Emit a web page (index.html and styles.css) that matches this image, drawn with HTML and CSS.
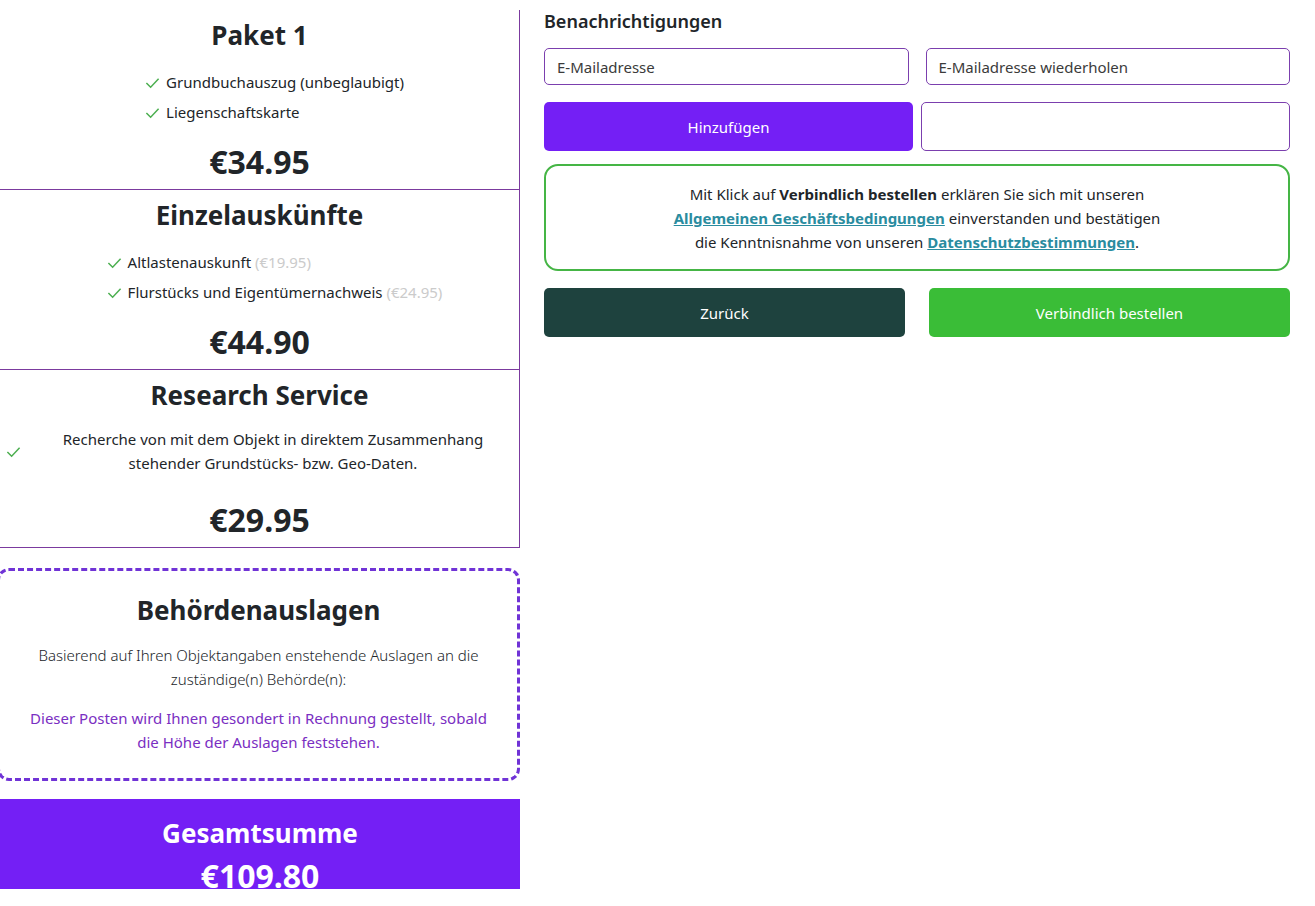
FILE: index.html
```html
<!DOCTYPE html>
<html lang="de">
<head>
    <meta charset="UTF-8">
    <meta name="viewport" content="width=device-width, initial-scale=1.0">
    <title>Bestellung</title>
    <link rel="stylesheet" href="styles.css">
</head>
<body>
    <div class="page">
        <div class="summary">
            <div class="products">
                <div class="card">
                    <h3>Paket 1</h3>
                    <ul class="items">
                        <li><svg class="check" viewBox="0 0 16 16"><path d="M1.5 8.5l4.5 4.5 8.5-9"/></svg>Grundbuchauszug (unbeglaubigt)</li>
                        <li><svg class="check" viewBox="0 0 16 16"><path d="M1.5 8.5l4.5 4.5 8.5-9"/></svg>Liegenschaftskarte</li>
                    </ul>
                    <h2>€34.95</h2>
                </div>
                <div class="card">
                    <h3>Einzelauskünfte</h3>
                    <ul class="items">
                        <li><svg class="check" viewBox="0 0 16 16"><path d="M1.5 8.5l4.5 4.5 8.5-9"/></svg>Altlastenauskunft <span class="muted">(€19.95)</span></li>
                        <li><svg class="check" viewBox="0 0 16 16"><path d="M1.5 8.5l4.5 4.5 8.5-9"/></svg>Flurstücks und Eigentümernachweis <span class="muted">(€24.95)</span></li>
                    </ul>
                    <h2>€44.90</h2>
                </div>
                <div class="card">
                    <h3>Research Service</h3>
                    <div class="desc">
                        <svg class="check" viewBox="0 0 16 16"><path d="M1.5 8.5l4.5 4.5 8.5-9"/></svg>
                        <p>Recherche von mit dem Objekt in direktem Zusammenhang<br>stehender Grundstücks- bzw. Geo-Daten.</p>
                    </div>
                    <h2>€29.95</h2>
                </div>
            </div>

            <div class="fees">
                <h3>Behördenauslagen</h3>
                <p class="fees-text">Basierend auf Ihren Objektangaben enstehende Auslagen an die zuständige(n) Behörde(n):</p>
                <p class="fees-note">Dieser Posten wird Ihnen gesondert in Rechnung gestellt, sobald die Höhe der Auslagen feststehen.</p>
            </div>

            <div class="total">
                <h3>Gesamtsumme</h3>
                <h2>€109.80</h2>
            </div>
        </div>

        <div class="checkout">
            <h4>Benachrichtigungen</h4>
            <div class="row inputs">
                <input type="email" placeholder="E-Mailadresse">
                <input type="email" placeholder="E-Mailadresse wiederholen">
            </div>
            <div class="row adds">
                <button class="btn btn-purple">Hinzufügen</button>
                <div class="email-list"></div>
            </div>
            <div class="terms">
                Mit Klick auf <b>Verbindlich bestellen</b> erklären Sie sich mit unseren<br>
                <a href="#">Allgemeinen Geschäftsbedingungen</a> einverstanden und bestätigen<br>
                die Kenntnisnahme von unseren <a href="#">Datenschutzbestimmungen</a>.
            </div>
            <div class="row actions">
                <button class="btn btn-dark">Zurück</button>
                <button class="btn btn-green">Verbindlich bestellen</button>
            </div>
        </div>
    </div>
</body>
</html>
```

FILE: styles.css
```css
* { box-sizing: border-box; }
body { margin: 0; padding: 0; background: #fff; color: #212529; font-family: "Noto Sans", "Open Sans", sans-serif; font-size: 15px; line-height: 24px; overflow-x: hidden; }
h2, h3, h4, p, ul { margin: 0; }
h2 { font-size: 32px; font-weight: 700; line-height: 38px; }
h3 { font-size: 26px; font-weight: 700; line-height: 34px; }

.page { display: flex; gap: 24px; padding-top: 10px; }

/* left side */
.summary { width: 520px; flex: none; }
.products { border-right: 1px solid #7b3a9e; }
.card { border-bottom: 1px solid #7b3a9e; text-align: center; padding: 8px 0; }
.card h3 { margin-bottom: 15px; }
.card h2 { margin-top: 16px; }
.items { display: inline-block; list-style: none; padding: 0 0 0 30px; text-align: left; }
.items li { line-height: 30px; }
.check { width: 15px; height: 15px; margin-right: 6px; vertical-align: -2px; fill: none; stroke: #4caf50; stroke-width: 1.6; }
.muted { color: #cbcbcb; }
.desc { display: flex; align-items: center; padding-left: 6px; margin: 2px 0 26px; }
.desc p { flex: 1; text-align: center; }

.fees { margin: 20px 0 0 -3px; border: 3px dashed #7033d6; border-radius: 12px; text-align: center; padding: 22px 24px 24px; }
.fees h3 { margin-bottom: 16px; }
.fees-text { font-weight: 300; margin-bottom: 15px; }
.fees-note { color: #7a2ec2; }

.total { margin-top: 18px; height: 90px; overflow: hidden; background: #741ff5; color: #fff; text-align: center; padding-top: 17px; }
.total h2 { margin-top: 7px; }

/* right side */
.checkout { width: 746px; }
.checkout h4 { margin: 0; font-size: 18px; font-weight: 600; line-height: 22px; }
.row { display: grid; grid-template-columns: 1fr 1fr; }
.inputs { gap: 17px; margin-top: 16px; }
.inputs input { height: 37px; border: 1px solid #7b3fae; border-radius: 5px; padding: 0 12px; font: inherit; color: #333; }
.inputs input::placeholder { color: #3b3b3b; }
.adds { gap: 8px; margin-top: 17px; }
.email-list { height: 49px; border: 1px solid #7b3fae; border-radius: 5px; }
.btn { height: 49px; border: none; border-radius: 5px; color: #fff; font: inherit; cursor: pointer; }
.btn-purple { background: #741ff5; }
.btn-dark { background: #1e423e; }
.btn-green { background: #3abd37; }
.terms { margin-top: 13px; border: 2px solid #45b545; border-radius: 14px; padding: 16px 20px 15px; text-align: center; }
.terms a { color: #2a8c9f; font-weight: 700; }
.actions { gap: 24px; margin-top: 17px; }
```
